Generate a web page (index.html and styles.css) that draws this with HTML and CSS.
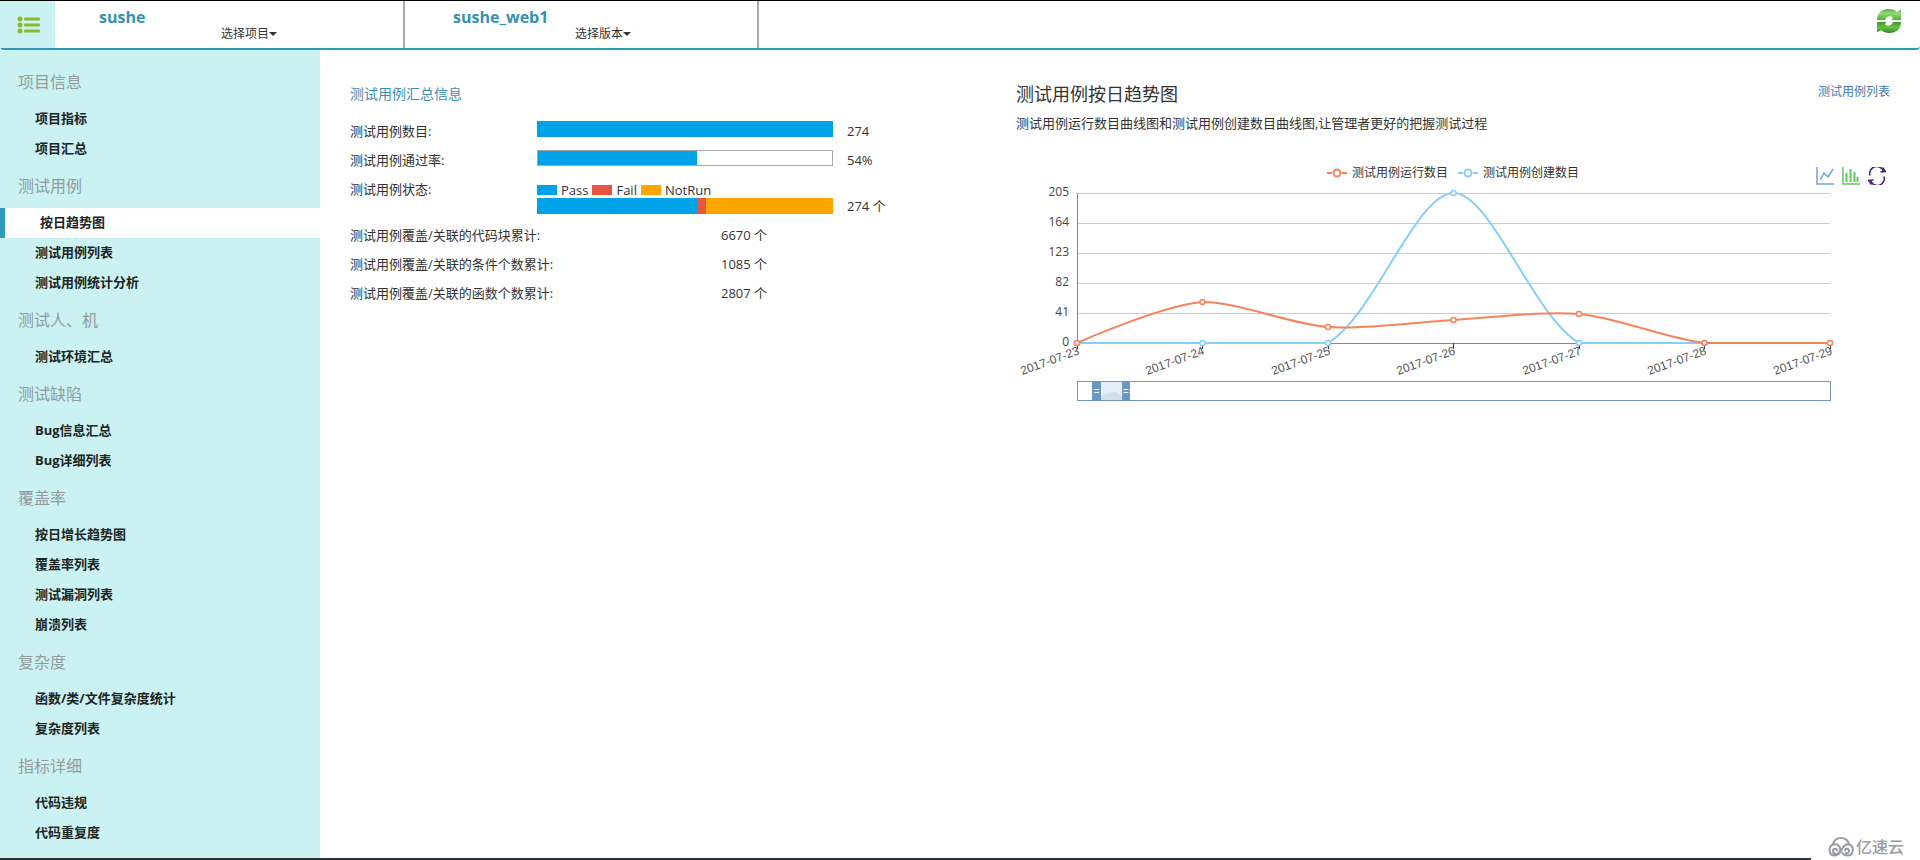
FILE: index.html
```html
<!DOCTYPE html>
<html lang="zh-CN">
<head>
<meta charset="utf-8">
<title>测试用例按日趋势图</title>
<link rel="stylesheet" href="styles.css">
</head>
<body>
<header class="topbar">
  <button class="menu-toggle" type="button" aria-label="菜单">
    <svg width="24" height="20" viewBox="0 0 24 20" fill="#8cb82b">
      <circle cx="3" cy="4" r="2.5"/><circle cx="3" cy="10" r="2.5"/><circle cx="3" cy="16" r="2.5"/>
      <rect x="7" y="2.5" width="16" height="3" rx="1"/><rect x="7" y="8.5" width="16" height="3" rx="1"/><rect x="7" y="14.5" width="16" height="3" rx="1"/>
    </svg>
  </button>
  <div class="picker">
    <strong class="picker-name">sushe</strong>
    <button class="picker-button" type="button">选择项目<span class="caret"></span></button>
  </div>
  <div class="picker">
    <strong class="picker-name">sushe_web1</strong>
    <button class="picker-button" type="button">选择版本<span class="caret"></span></button>
  </div>
  <button class="refresh" type="button" aria-label="刷新">
    <svg width="26" height="26" viewBox="0 0 26 26">
      <defs>
        <linearGradient id="top" x1="0" y1="0" x2="0" y2="1"><stop offset="0" stop-color="#4fae3a"/><stop offset=".4" stop-color="#94d976"/><stop offset="1" stop-color="#4fb235"/></linearGradient>
        <linearGradient id="bottom" x1="0" y1="0" x2="0" y2="1"><stop offset="0" stop-color="#2c8c1c"/><stop offset=".5" stop-color="#62c243"/><stop offset="1" stop-color="#3a9c28"/></linearGradient>
      </defs>
      <path d="M1 12C1 5 6 1 12.500 1c3.500 0 6.500 1 8.500 3l4-2.500V12H15.500L17 9.500C14 7 10 8.500 9 12z" fill="url(#top)"/>
      <path d="M1 12C1 5 6 1 12.500 1c3.500 0 6.500 1 8.500 3l4-2.500V12H15.500L17 9.500C14 7 10 8.500 9 12z" fill="url(#bottom)" transform="rotate(180 13 13)"/>
    </svg>
  </button>
</header>

<div class="body">
  <nav class="sidebar">
    <h2 class="group">项目信息</h2>
    <a class="item" href="#">项目指标</a>
    <a class="item" href="#">项目汇总</a>
    <h2 class="group">测试用例</h2>
    <a class="item active" href="#">按日趋势图</a>
    <a class="item" href="#">测试用例列表</a>
    <a class="item" href="#">测试用例统计分析</a>
    <h2 class="group">测试人、机</h2>
    <a class="item" href="#">测试环境汇总</a>
    <h2 class="group">测试缺陷</h2>
    <a class="item" href="#">Bug信息汇总</a>
    <a class="item" href="#">Bug详细列表</a>
    <h2 class="group">覆盖率</h2>
    <a class="item" href="#">按日增长趋势图</a>
    <a class="item" href="#">覆盖率列表</a>
    <a class="item" href="#">测试漏洞列表</a>
    <a class="item" href="#">崩溃列表</a>
    <h2 class="group">复杂度</h2>
    <a class="item" href="#">函数/类/文件复杂度统计</a>
    <a class="item" href="#">复杂度列表</a>
    <h2 class="group">指标详细</h2>
    <a class="item" href="#">代码违规</a>
    <a class="item" href="#">代码重复度</a>
  </nav>

  <main class="main">
    <section class="summary">
      <h3 class="summary-title">测试用例汇总信息</h3>
      <div class="stat">
        <span>测试用例数目:</span>
        <div class="bar"><div class="part pass" style="width:100%"></div></div>
        <span class="figure">274</span>
      </div>
      <div class="stat">
        <span>测试用例通过率:</span>
        <div class="bar framed"><div class="part pass" style="width:54%"></div></div>
        <span class="figure">54%</span>
      </div>
      <div class="stat">
        <span>测试用例状态:</span>
        <div class="keys">
          <span class="swatch pass"></span>Pass
          <span class="swatch fail"></span>Fail
          <span class="swatch notrun"></span>NotRun
        </div>
      </div>
      <div class="stat status">
        <div class="bar"><div class="part pass" style="width:54%"></div><div class="part fail" style="width:3%"></div><div class="part notrun" style="width:43%"></div></div>
        <span class="figure">274 个</span>
      </div>
      <div class="count"><span>测试用例覆盖/关联的代码块累计:</span><span>6670 个</span></div>
      <div class="count"><span>测试用例覆盖/关联的条件个数累计:</span><span>1085 个</span></div>
      <div class="count"><span>测试用例覆盖/关联的函数个数累计:</span><span>2807 个</span></div>
    </section>

    <section class="trend">
      <div class="trend-head">
        <h1 class="trend-title">测试用例按日趋势图</h1>
        <a class="trend-link" href="#">测试用例列表</a>
      </div>
      <p class="trend-note">测试用例运行数目曲线图和测试用例创建数目曲线图,让管理者更好的把握测试过程</p>
      <div class="chart-head">
        <div class="legend">
          <span class="key"><svg width="20" height="10" viewBox="0 0 20 10" fill="none" stroke="#f4845c" stroke-width="2"><path d="M0 5h5M15 5h5"/><circle cx="10" cy="5" r="3.500"/></svg>测试用例运行数目</span>
          <span class="key"><svg width="20" height="10" viewBox="0 0 20 10" fill="none" stroke="#87cefa" stroke-width="2"><path d="M0 5h5M15 5h5"/><circle cx="10" cy="5" r="3.500"/></svg>测试用例创建数目</span>
        </div>
        <div class="tools">
          <button type="button" aria-label="折线图"><svg width="18" height="18" viewBox="0 0 18 18" fill="none" stroke="#6fa3ea" stroke-width="1.500"><path d="M1 0v17h17M4 13l4-7 4 4 5-8"/></svg></button>
          <button type="button" aria-label="柱状图"><svg width="18" height="18" viewBox="0 0 18 18" fill="none" stroke="#5fcb5f" stroke-width="1.500"><path d="M1 0v17h17"/><path d="M4.500 6v9M8.500 2v13M12.500 5v10M15.500 10v5" stroke-width="2"/></svg></button>
          <button type="button" aria-label="还原"><svg width="18" height="18" viewBox="0 0 18 18" fill="none" stroke="#4b1a78" stroke-width="1.500"><path d="M2 8.500A7 7 0 0 1 15.500 4.500M16 9.500A7 7 0 0 1 2.500 13.500"/><path d="M14.500 .5l3 4-5 .5M3.500 17.500l-3-4 5-.5"/></svg></button>
        </div>
      </div>
      <svg class="chart" viewBox="1016 185 874 225" role="img" aria-label="按日趋势">
        <path class="grid" d="M1077 193.500h753M1077 223.500h753M1077 253.500h753M1077 283.500h753M1077 313.500h753"/>
        <path class="axis" d="M1077.500 193v150.500h753"/>
        <path class="tick" d="M1077.500 343v6M1202.500 343v6M1328.500 343v6M1453.500 343v6M1579.500 343v6M1704.500 343v6M1830.500 343v6"/>
        <g class="values">
          <text x="1069" y="196">205</text><text x="1069" y="226">164</text><text x="1069" y="256">123</text><text x="1069" y="286">82</text><text x="1069" y="316">41</text><text x="1069" y="346">0</text>
        </g>
        <g class="dates">
          <text transform="translate(1080 354) rotate(-20)">2017-07-23</text>
          <text transform="translate(1205 354) rotate(-20)">2017-07-24</text>
          <text transform="translate(1331 354) rotate(-20)">2017-07-25</text>
          <text transform="translate(1456 354) rotate(-20)">2017-07-26</text>
          <text transform="translate(1582 354) rotate(-20)">2017-07-27</text>
          <text transform="translate(1707 354) rotate(-20)">2017-07-28</text>
          <text transform="translate(1833 354) rotate(-20)">2017-07-29</text>
        </g>
        <g class="created">
          <path d="M1077 343H1328C1374 316 1416 193 1453.500 193C1491 193 1533 316 1579 343H1830"/>
          <circle cx="1077" cy="343" r="2.500"/><circle cx="1202.500" cy="343" r="2.500"/><circle cx="1328" cy="343" r="2.500"/><circle cx="1453.500" cy="193" r="2.500"/><circle cx="1579" cy="343" r="2.500"/><circle cx="1704.500" cy="343" r="2.500"/><circle cx="1830" cy="343" r="2.500"/>
        </g>
        <g class="run">
          <path d="M1077 343C1077 343 1164 304.500 1202.500 302C1239.500 302 1290 324.300 1328 327C1365.500 329.700 1416 322 1453.500 320C1491 318 1542 310.600 1579 314C1617 317.500 1666.500 338.600 1704.500 343H1830"/>
          <circle cx="1077" cy="343" r="2.500"/><circle cx="1202.500" cy="302" r="2.500"/><circle cx="1328" cy="327" r="2.500"/><circle cx="1453.500" cy="320" r="2.500"/><circle cx="1579" cy="314" r="2.500"/><circle cx="1704.500" cy="343" r="2.500"/><circle cx="1830" cy="343" r="2.500"/>
        </g>
        <rect x="1101" y="382" width="21" height="18" fill="#e4eef7"/>
        <path d="M1101 396l8-3 6-1 7 4v4h-21z" fill="#d3e0ec"/>
        <rect class="zoom-frame" x="1077.500" y="381.500" width="753" height="19"/>
        <path d="M1092 381h9v20h-9zM1122 381h8v20h-8z" fill="#6a98c3"/>
        <path d="M1094 389.500h5M1094 392.500h5M1123.500 389.500h5M1123.500 392.500h5" stroke="#fff"/>
      </svg>
    </section>
  </main>
</div>

<footer class="footer">
  <div class="watermark">
    <svg width="26" height="20" viewBox="0 0 26 20" fill="none" stroke="#979ba3" stroke-width="2" stroke-linecap="round"><path d="M5 7C6 3.500 9 1 13 1s7 2.500 8 6"/><path d="M9 13.500c0-2.500-4-2.500-4 .5 0 4 6 4 7 0 1-5-3-7.500-6.500-6.500C0 9 0 18.500 7 18.500c5 0 6-5 8-8 1.500-2.500 4-3.500 6-3 5.500 1.500 5 11-1.500 11-2.500 0-4-1-5-2.500M17 13.500c0-2.500 4-2.500 4 .5 0 2-2 2.500-3 2"/></svg>
    亿速云
  </div>
</footer>
</body>
</html>
```
FILE: styles.css
```css
* { box-sizing: border-box; }

body {
  margin: 0;
  min-height: 100vh;
  display: flex;
  flex-direction: column;
  background: #fff;
  color: #333;
  font: 13px/29px "Open Sans", "Noto Sans CJK SC", sans-serif;
}

h1, h2, h3, p { margin: 0; font-weight: 400; }
a { text-decoration: none; }
button { padding: 0; border: 0; background: none; font: inherit; color: inherit; cursor: pointer; }
svg { display: block; }

.topbar {
  display: flex;
  height: 50px;
  border-top: 1px solid #000;
  border-bottom: 2px solid #2e9ab7;
  border-radius: 0 0 4px 4px;
}
.menu-toggle {
  width: 55px;
  padding-left: 17px;
  background: #caf2f2;
}
.picker {
  width: 350px;
  padding: 6px 0 0 44px;
  border-right: 2px solid #aaa;
}
.picker + .picker { width: 354px; padding-left: 48px; }
.picker-name {
  display: block;
  height: 20px;
  color: #3493b0;
  font-size: 16px;
  line-height: 20px;
}
.picker-button {
  display: flex;
  align-items: center;
  margin-left: 122px;
  font-size: 12px;
  line-height: 14px;
}
.caret {
  border: 4px solid transparent;
  border-top-color: #333;
  border-bottom: 0;
}
.refresh { margin: 0 18px 0 auto; align-self: center; padding-bottom: 8px; }

.body { flex: 1; display: flex; }

.sidebar {
  flex: none;
  width: 320px;
  padding: 10px 0 8px;
  background: #caf2f2;
}
.group {
  height: 44px;
  padding-left: 18px;
  color: #929c9c;
  font-size: 16px;
  line-height: 44px;
}
.item {
  display: block;
  height: 30px;
  padding-left: 35px;
  color: #1c2424;
  font-weight: 700;
  line-height: 28px;
}
.item.active {
  border-left: 5px solid #2e9ab7;
  background: #fff;
}

.main {
  flex: 1;
  display: grid;
  grid-template-columns: 666fr 874fr;
  align-items: start;
  padding: 28px 30px;
}

.summary-title {
  margin-bottom: 8px;
  color: #3a8fae;
  font-size: 14px;
  line-height: 32px;
}
.stat {
  display: grid;
  grid-template-columns: 187px 296px auto;
  height: 29px;
  line-height: 27px;
}
.figure { margin-left: 14px; }
.bar { display: flex; height: 16px; margin-top: 3px; }
.bar.framed { border: 1px solid #aaa; }
.pass { background: #00a2e8; }
.fail { background: #e85642; }
.notrun { background: #ffa500; }
.keys { display: flex; align-items: center; gap: 4px; height: 28px; }
.swatch { width: 20px; height: 10px; }
.status {
  grid-template-columns: 296px auto;
  margin: -12px 0 0 187px;
}
.status .bar { margin-top: 5px; }
.count {
  display: grid;
  grid-template-columns: 371px auto;
  height: 29px;
  line-height: 27px;
}

.trend-head { display: flex; justify-content: space-between; line-height: 32px; }
.trend-title { font-size: 18px; }
.trend-link { color: #4277b0; font-size: 12px; line-height: 28px; }
.trend-note { line-height: 26px; }
.chart-head {
  display: grid;
  grid-template-columns: 1fr auto 1fr;
  margin-top: 25px;
  font-size: 12px;
  line-height: 24px;
}
.legend { grid-column: 2; display: flex; gap: 10px; }
.key { display: flex; align-items: center; gap: 5px; }
.tools {
  display: flex;
  align-items: flex-end;
  justify-content: flex-end;
  gap: 8px;
  padding-right: 4px;
}

.chart { width: 100%; height: auto; }
.grid { stroke: #ccc; }
.axis { fill: none; stroke: #888; }
.tick { stroke: #333; }
.values { text-anchor: end; fill: #444; font-size: 12px; }
.dates { text-anchor: end; fill: #555; font: 12px "Liberation Sans", sans-serif; }
.created path, .run path { fill: none; stroke-width: 2; }
.created circle, .run circle { fill: #fff; stroke-width: 1.5; }
.created { stroke: #87cefa; }
.run { stroke: #f4845c; }
.zoom-frame { fill: none; stroke: #7898b8; }

.footer { position: relative; height: 2px; margin-right: 109px; background: #2b3135; }
.watermark {
  position: absolute;
  right: -93px;
  bottom: 1px;
  display: flex;
  align-items: center;
  gap: 2px;
  color: #979ba3;
  font-size: 16px;
  font-weight: 500;
  line-height: 24px;
  white-space: nowrap;
}
```
